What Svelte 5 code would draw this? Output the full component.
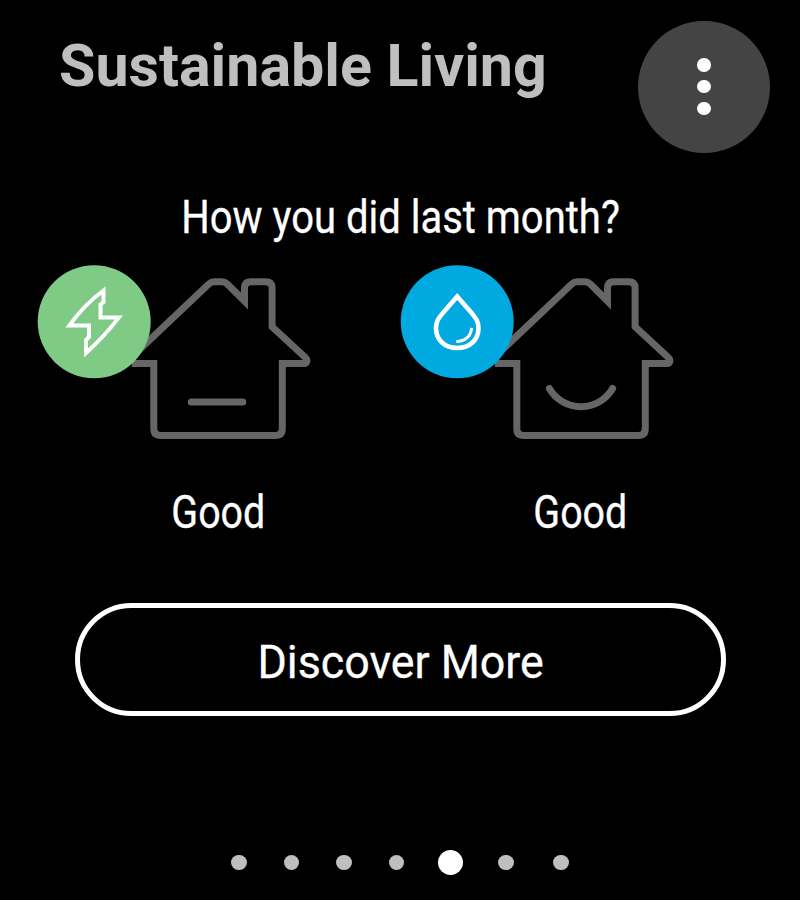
<script>
  const pages = [0, 1, 2, 3, 4, 5, 6];
  const current = 4;
  const results = [
    { kind: 'energy', label: 'Good' },
    { kind: 'water', label: 'Good' }
  ];
</script>

<main>
  <header>
    <h1>Sustainable Living</h1>
    <button class="menu" aria-label="Menu">
      <i></i><i></i><i></i>
    </button>
  </header>

  <p class="question"><span class="narrow">How you did last month?</span></p>

  <section class="results">
    {#each results as r}
      <div class="result">
        <svg class="art" viewBox="38.2 266 276 180" width="276" height="180" aria-hidden="true">
          <g class="house">
            <path d="M132 363.5H154V428.5Q154 435.5 161 435.5H275.5Q282.5 435.5 282.5 428.5V363.5H304C307.5 363.5 308 360 305.5 357.5L272.3 326.7V288Q272.3 281.7 266 281.7H251Q244.7 281.7 244.7 288V301L227.5 284Q225 281.7 222 281.7H214.5Q211.5 281.7 209 284L134 355" />
            {#if r.kind === 'energy'}
              <path class="mouth" d="M191.5 402H243" />
            {:else}
              <path class="mouth" d="M186.6 388.5A36.5 36.5 0 0 0 249.8 388.5" />
            {/if}
          </g>
          {#if r.kind === 'energy'}
            <circle cx="94.4" cy="321.7" r="56.5" fill="#7fcb86" />
            <path class="glyph" d="M103.7 290.5V302L100.7 304.5V317.6H119Q104 337 86.2 353V340L89.2 337V325.6H69.5Q84 305 103.7 290.5Z" />
          {:else}
            <circle cx="94.4" cy="321.7" r="56.5" fill="#00a9e0" />
            <path class="glyph drop" d="M94.4 296.5L80.5 312.5C76 318 73.2 321 73.2 328C73.2 340 82 348 94.4 348C107 348 115.7 340 115.7 328C115.7 321 112.9 318 108.4 312.5Z" />
            <path class="glint" d="M93.5 341.5C102 341.5 108.2 336.7 108.8 327.8" />
          {/if}
        </svg>
        <p><span class="narrow">{r.label}</span></p>
      </div>
    {/each}
  </section>

  <button class="discover"><span>Discover More</span></button>

  <nav>
    {#each pages as p}
      <i class:active={p === current}></i>
    {/each}
  </nav>
</main>

<style>
  :global(body) {
    margin: 0;
    background: #000;
  }
  main {
    box-sizing: border-box;
    width: 800px;
    height: 900px;
    overflow: hidden;
    display: flex;
    flex-direction: column;
    background: #000;
    color: #fff;
    font-family: Roboto, sans-serif;
    font-size: 45.5px;
    line-height: 54px;
  }
  header {
    display: flex;
    justify-content: space-between;
    align-items: flex-start;
    height: 170.5px;
    padding: 20.5px 29.7px 0 59.3px;
    flex: none;
  }
  h1 {
    margin: 10.5px 0 0;
    color: #bfbfbf;
    font-size: 59.5px;
    font-weight: 700;
    line-height: 70px;
    white-space: nowrap;
    transform: scaleX(0.994);
    transform-origin: left;
  }
  button {
    padding: 0;
    border: 0;
    background: none;
    color: inherit;
    font: inherit;
  }
  .menu {
    display: flex;
    flex-direction: column;
    align-items: center;
    justify-content: center;
    gap: 8.4px;
    width: 132.5px;
    height: 132.5px;
    border-radius: 50%;
    background: #444;
  }
  .menu i {
    width: 13.4px;
    height: 13.4px;
    border-radius: 50%;
    background: #fff;
  }
  p {
    margin: 0;
    text-align: center;
    white-space: nowrap;
  }
  .narrow {
    display: inline-block;
    transform: scaleX(0.879);
    -webkit-text-stroke: 0.3px #fff;
  }
  .question {
    height: 74.5px;
    flex: none;
  }
  .results {
    display: flex;
    gap: 2.5px;
    height: 337px;
    padding-left: 38px;
    flex: none;
  }
  .result {
    width: 360px;
  }
  .result .narrow {
    transform: scaleX(0.865);
  }
  .art {
    display: block;
    overflow: visible;
  }
  .result p {
    margin-top: 40.5px;
  }
  .house {
    fill: none;
    stroke: #666;
    stroke-width: 7;
  }
  .mouth {
    stroke-linecap: round;
  }
  .glyph {
    fill: none;
    stroke: #fff;
    stroke-width: 4;
    stroke-miterlimit: 10;
  }
  .drop {
    stroke-width: 4.6;
  }
  .glint {
    fill: none;
    stroke: #fff;
    stroke-width: 3;
  }
  .discover {
    box-sizing: border-box;
    align-self: center;
    width: 651px;
    height: 113px;
    padding: 8px 0 0 2px;
    border: 5px solid #fff;
    border-radius: 57px;
    flex: none;
  }
  .discover span {
    display: inline-block;
    transform: scaleX(0.983);
    -webkit-text-stroke: 0.3px #fff;
  }
  nav {
    display: flex;
    align-items: center;
    justify-content: center;
    gap: 37px;
    margin-top: 134.1px;
    height: 26px;
  }
  nav i {
    width: 15.5px;
    height: 15.5px;
    border-radius: 50%;
    background: #bfbfbf;
  }
  nav .active {
    width: 25px;
    height: 25px;
    margin: 0 -2.2px 0 -3.3px;
    background: #fff;
  }
  nav i:last-child {
    margin-left: 2.5px;
  }
</style>
